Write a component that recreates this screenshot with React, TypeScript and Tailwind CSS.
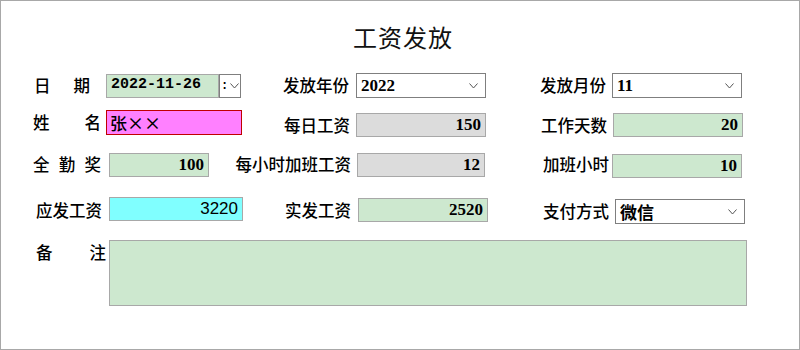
import React from "react";

const cjk = { fontFamily: '"Noto Sans CJK SC", "Noto Sans", sans-serif' };
const mono = { fontFamily: '"Liberation Mono", "Noto Sans CJK SC", monospace' };
const serif = { fontFamily: '"Liberation Serif", "Noto Sans CJK SC", serif' };

function Chevron() {
  return (
    <svg width="9" height="6" viewBox="0 0 9 6" className="shrink-0">
      <polyline points="0.5,0.5 4.5,5 8.5,0.5" fill="none" stroke="#555" strokeWidth="1" />
    </svg>
  );
}

function Label({ text, w, className = "" }: { text: string; w: number; className?: string }) {
  return (
    <div
      className={"text-[16.5px] leading-none text-black font-medium text-right shrink-0 " + className}
      style={{ ...cjk, width: w }}
    >
      {text}
    </div>
  );
}

function Box({
  w,
  bg,
  value,
  right = true,
  border = "border-[#a8a8a8]",
  font = serif,
  size = "text-[17px]",
  weight = "font-bold",
}: {
  w: number;
  bg: string;
  value: string;
  right?: boolean;
  border?: string;
  font?: React.CSSProperties;
  size?: string;
  weight?: string;
}) {
  return (
    <div
      className={`h-[24px] border ${border} ${bg} flex items-center px-[4px] shrink-0 ${right ? "justify-end" : "justify-start"} ${size} ${weight} text-black`}
      style={{ ...font, width: w }}
    >
      {value}
    </div>
  );
}

function Select({ w, value, font = serif }: { w: number; value: string; font?: React.CSSProperties }) {
  return (
    <div
      className="h-[25px] border border-[#7f7f7f] bg-white flex items-center justify-between pl-[4px] pr-[7px] shrink-0 text-[17px] font-bold text-black"
      style={{ ...font, width: w }}
    >
      <span>{value}</span>
      <Chevron />
    </div>
  );
}

export default function App() {
  return (
    <div className="w-[800px] h-[350px] bg-white border border-[#a8a8a8] overflow-hidden">
      <div className="h-[72px] flex justify-center pt-[20px]">
        <div className="text-[24px] leading-[32px] text-[#111] pl-[6px] tracking-[1px]" style={cjk}>
          工资发放
        </div>
      </div>

      {/* Row 1 */}
      <div className="flex items-center h-[25px]">
        <div className="w-[56px] ml-[33px] flex justify-between text-[16.5px] font-medium leading-none" style={cjk}>
          <span>日</span>
          <span>期</span>
        </div>
        <div className="ml-[16px] flex">
          <Box w={113} bg="bg-[#cde8cf]" value="2022-11-26" right={false} font={mono} size="text-[15px]" />
          <div className="w-[22px] h-[24px] border border-[#7f7f7f] bg-white flex items-center pl-[1px] gap-[2px] text-[12px]" style={mono}>
            <span className="leading-none font-bold">:</span>
            <Chevron />
          </div>
        </div>
        <Label text="发放年份" w={108} />
        <div className="ml-[7px]">
          <Select w={130} value="2022" />
        </div>
        <Label text="发放月份" w={120} />
        <div className="ml-[6px]">
          <Select w={130} value="11" />
        </div>
      </div>

      {/* Row 2 */}
      <div className="flex items-start h-[26px] mt-[12px]">
        <div className="w-[68px] ml-[32px] flex justify-between text-[16.5px] font-medium leading-none pt-[4px]" style={cjk}>
          <span>姓</span>
          <span>名</span>
        </div>
        <div className="ml-[5px]">
          <div
            className="w-[136px] h-[25px] border border-[#c00000] bg-[#ff80ff] flex items-center px-[3px] text-[17px] text-black font-medium"
            style={cjk}
          >
            张××
          </div>
        </div>
        <div className="flex items-center mt-[3px]">
          <Label text="每日工资" w={108} />
          <div className="ml-[6px]">
            <Box w={130} bg="bg-[#dcdcdc]" value="150" />
          </div>
          <Label text="工作天数" w={121} />
          <div className="ml-[6px]">
            <Box w={130} bg="bg-[#cde8cf]" value="20" />
          </div>
        </div>
      </div>

      {/* Row 3 */}
      <div className="flex items-center h-[25px] mt-[16px]">
        <div className="w-[68px] ml-[32px] flex justify-between text-[16.5px] font-medium leading-none" style={cjk}>
          <span>全</span>
          <span>勤</span>
          <span>奖</span>
        </div>
        <div className="ml-[8px]">
          <Box w={100} bg="bg-[#cde8cf]" value="100" />
        </div>
        <Label text="每小时加班工资" w={142} />
        <div className="ml-[6px]">
          <Box w={128} bg="bg-[#dcdcdc]" value="12" />
        </div>
        <Label text="加班小时" w={124} />
        <div className="ml-[3px] mt-[2px]">
          <Box w={130} bg="bg-[#cde8cf]" value="10" />
        </div>
      </div>

      {/* Row 4 */}
      <div className="flex items-center h-[28px] mt-[19px]">
        <div className="w-[66px] ml-[35px] text-[16.5px] font-medium leading-none" style={cjk}>
          应发工资
        </div>
        <div className="ml-[7px] -mt-[3px]">
          <Box
            w={134}
            bg="bg-[#80ffff]"
            value="3220"
            font={{ fontFamily: '"Liberation Sans", "Noto Sans", sans-serif' }}
            size="text-[17px]"
            weight="font-normal"
          />
        </div>
        <Label text="实发工资" w={108} />
        <div className="ml-[7px] -mt-[1px]">
          <Box w={130} bg="bg-[#cde8cf]" value="2520" />
        </div>
        <Label text="支付方式" w={121} className="mt-[3px]" />
        <div className="ml-[6px] mt-[3px]">
          <Select w={130} value="微信" font={cjk} />
        </div>
      </div>

      {/* Row 5 */}
      <div className="flex items-start mt-[16px]">
        <div className="w-[70px] ml-[35px] flex justify-between text-[16.5px] font-medium leading-none pt-[4px]" style={cjk}>
          <span>备</span>
          <span>注</span>
        </div>
        <div className="ml-[3px] w-[638px] h-[66px] border border-[#a8a8a8] bg-[#cde8cf]" />
      </div>
    </div>
  );
}
